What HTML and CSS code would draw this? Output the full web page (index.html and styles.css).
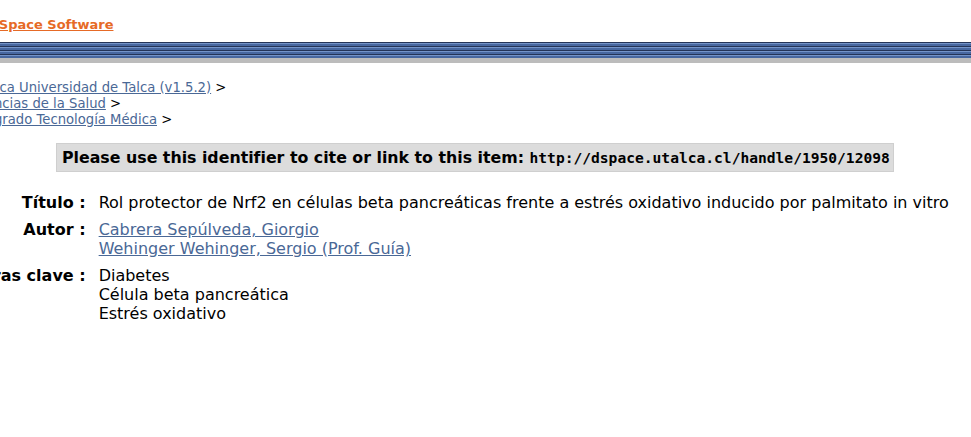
FILE: index.html
```html
<!DOCTYPE html>
<html lang="es">
<head>
  <meta charset="UTF-8">
  <title>Rol protector de Nrf2 en células beta pancreáticas</title>
  <link rel="stylesheet" href="styles.css">
</head>
<body>
  <div class="header">
    <a class="brand" href="#">DSpace Software</a>
  </div>
  <div class="stripe"></div>
  <div class="shadow"></div>

  <div class="crumbs">
    <div><a href="#">Utalca Universidad de Talca (v1.5.2)</a> &gt;</div>
    <div><a href="#">Ciencias de la Salud</a> &gt;</div>
    <div><a href="#">Pregrado Tecnología Médica</a> &gt;</div>
  </div>

  <div class="cite">
    Please use this identifier to cite or link to this item:
    <code>http://dspace.utalca.cl/handle/1950/12098</code>
  </div>

  <table class="meta">
    <tr>
      <td class="label">Título :</td>
      <td>Rol protector de Nrf2 en células beta pancreáticas frente a estrés oxidativo inducido por palmitato in vitro</td>
    </tr>
    <tr>
      <td class="label">Autor :</td>
      <td>
        <a href="#">Cabrera Sepúlveda, Giorgio</a><br>
        <a href="#">Wehinger Wehinger, Sergio (Prof. Guía)</a>
      </td>
    </tr>
    <tr>
      <td class="label">Palabras clave :</td>
      <td>Diabetes<br>Célula beta pancreática<br>Estrés oxidativo</td>
    </tr>
  </table>
</body>
</html>
```

FILE: styles.css
```css
body {
  margin: 0;
  font-family: "DejaVu Sans", Verdana, sans-serif;
  color: #000;
  background: #fff;
  overflow: hidden;
}
a {
  color: #4a6896;
}
.header {
  height: 42px;
  padding-top: 14px;
  box-sizing: border-box;
  margin-left: -12px;
}
.brand {
  color: #e66a26;
  font-weight: bold;
  font-size: 13px;
}
.stripe {
  height: 16px;
  background: repeating-linear-gradient(
    to bottom,
    #243457 0px,
    #243457 1px,
    #7393c8 1px,
    #7393c8 2px,
    #4767a0 2px,
    #4767a0 4px
  );
}
.shadow {
  height: 5px;
  background: #bcbcbc;
}
.crumbs {
  margin: 17px 0 0 -27px;
  font-size: 13.2px;
  line-height: 16px;
  color: #000;
}
.cite {
  margin: 15px 0 0 56px;
  width: 838px;
  height: 29px;
  box-sizing: border-box;
  padding: 4px 5px;
  background: #dcdcdc;
  border: 1px solid #cfcfcf;
  font-size: 15.8px;
  font-weight: bold;
  white-space: nowrap;
}
.cite code {
  font-family: "DejaVu Sans Mono", "Liberation Mono", monospace;
  font-size: 14.6px;
}
.meta {
  margin: 17px 0 0 -57px;
  border-collapse: collapse;
  font-size: 16px;
  line-height: 19px;
}
.meta td {
  vertical-align: top;
  padding: 4px 0;
}
.meta .label {
  text-align: right;
  font-weight: bold;
  white-space: nowrap;
  padding-right: 13px;
}
```
